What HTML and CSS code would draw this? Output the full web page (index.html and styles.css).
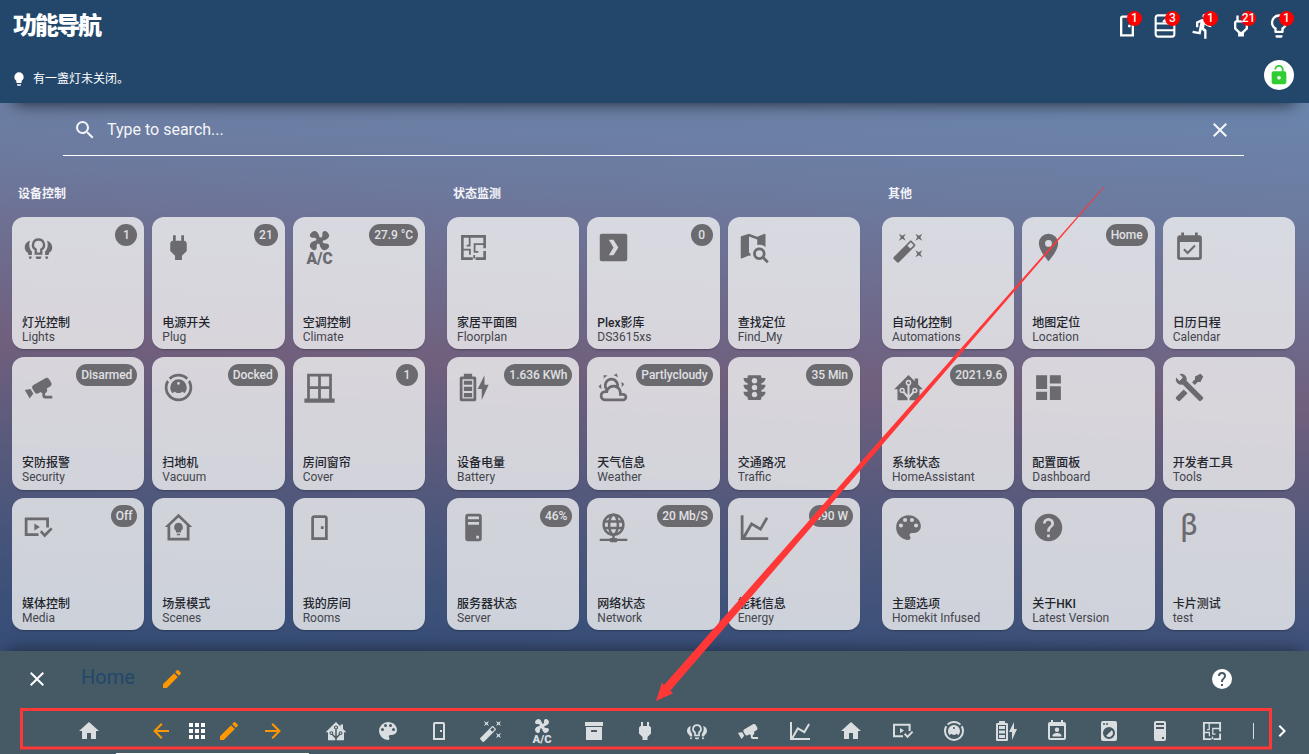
FILE: index.html
```html
<!DOCTYPE html>
<html lang="zh-CN">
<head>
<meta charset="utf-8">
<title>功能导航</title>
<link rel="stylesheet" href="styles.css">
</head>
<body>
<svg class="sprite" width="0" height="0" aria-hidden="true">
  <defs>
    <mask id="tree-mask" maskUnits="userSpaceOnUse" x="0" y="0" width="24" height="24">
      <rect width="24" height="24" fill="#fff"/>
      <g fill="none" stroke="#000" stroke-width="1.1"><path d="M12 10.2V22M12 20.5V19.3L8.3 15.3M12 20.5V19.3L15.7 15.3" stroke-width="1.5"/><circle cx="12" cy="8.5" r="1.5"/><circle cx="7.4" cy="14.1" r="1.4"/><circle cx="16.6" cy="14.1" r="1.4"/></g>
    </mask>
  </defs>
  <symbol id="home" viewBox="0 0 24 24"><path d="M10,20V14H14V20H19V12H22L12,3L2,12H5V20H10Z"/></symbol>
  <symbol id="left" viewBox="0 0 24 24"><path d="M20,11V13H8L13.5,18.5L12.08,19.92L4.16,12L12.08,4.08L13.5,5.5L8,11H20Z"/></symbol>
  <symbol id="right" viewBox="0 0 24 24"><path d="M4,11V13H16L10.5,18.5L11.92,19.92L19.84,12L11.92,4.08L10.5,5.5L16,11H4Z"/></symbol>
  <symbol id="pencil" viewBox="0 0 24 24"><path d="M20.71,7.04C21.1,6.65 21.1,6 20.71,5.63L18.37,3.29C18,2.9 17.35,2.9 16.96,3.29L15.12,5.12L18.87,8.87M3,17.25V21H6.75L17.81,9.93L14.06,6.18L3,17.25Z"/></symbol>
  <symbol id="apps" viewBox="0 0 24 24"><path d="M16,20H20V16H16M16,14H20V10H16M10,8H14V4H10M16,8H20V4H16M10,14H14V10H10M4,14H8V10H4M4,20H8V16H4M10,20H14V16H10M4,8H8V4H4V8Z"/></symbol>
  <symbol id="palette" viewBox="0 0 24 24"><path d="M17.5,12A1.5,1.5 0 0,1 16,10.5A1.5,1.5 0 0,1 17.5,9A1.5,1.5 0 0,1 19,10.5A1.5,1.5 0 0,1 17.5,12M14.5,8A1.5,1.5 0 0,1 13,6.5A1.5,1.5 0 0,1 14.5,5A1.5,1.5 0 0,1 16,6.5A1.5,1.5 0 0,1 14.5,8M9.5,8A1.5,1.5 0 0,1 8,6.5A1.5,1.5 0 0,1 9.5,5A1.5,1.5 0 0,1 11,6.5A1.5,1.5 0 0,1 9.5,8M6.5,12A1.5,1.5 0 0,1 5,10.5A1.5,1.5 0 0,1 6.5,9A1.5,1.5 0 0,1 8,10.5A1.5,1.5 0 0,1 6.5,12M12,3A9,9 0 0,0 3,12A9,9 0 0,0 12,21A1.5,1.5 0 0,0 13.5,19.5C13.5,19.11 13.35,18.76 13.11,18.5C12.88,18.23 12.73,17.88 12.73,17.5A1.5,1.5 0 0,1 14.23,16H16A5,5 0 0,0 21,11C21,6.58 16.97,3 12,3Z"/></symbol>
  <symbol id="help" viewBox="0 0 24 24"><path d="M15.07,11.25L14.17,12.17C13.45,12.89 13,13.5 13,15H11V14.5C11,13.39 11.45,12.39 12.17,11.67L13.41,10.41C13.78,10.05 14,9.55 14,9C14,7.89 13.1,7 12,7A2,2 0 0,0 10,9H8A4,4 0 0,1 12,5A4,4 0 0,1 16,9C16,9.88 15.64,10.67 15.07,11.25M13,19H11V17H13M12,2A10,10 0 0,0 2,12A10,10 0 0,0 12,22A10,10 0 0,0 22,12C22,6.47 17.5,2 12,2Z"/></symbol>
  <symbol id="close" viewBox="0 0 24 24"><path d="M19,6.41L17.59,5L12,10.59L6.41,5L5,6.41L10.59,12L5,17.59L6.41,19L12,13.41L17.59,19L19,17.59L13.41,12L19,6.41Z"/></symbol>
  <symbol id="magnify" viewBox="0 0 24 24"><path d="M9.5,3A6.5,6.5 0 0,1 16,9.5C16,11.11 15.41,12.59 14.44,13.73L14.71,14H15.5L20.5,19L19,20.5L14,15.5V14.71L13.73,14.44C12.59,15.41 11.11,16 9.5,16A6.5,6.5 0 0,1 3,9.5A6.5,6.5 0 0,1 9.5,3M9.5,5C7,5 5,7 5,9.5C5,12 7,14 9.5,14C12,14 14,12 14,9.5C14,7 12,5 9.5,5Z"/></symbol>
  <symbol id="chevron" viewBox="0 0 24 24"><path d="M8.59,16.58L13.17,12L8.59,7.41L10,6L16,12L10,18L8.59,16.58Z"/></symbol>
  <symbol id="archive" viewBox="0 0 24 24"><path d="M3,3H21V7H3V3M4,8H20V21H4V8M9.5,11A0.5,0.5 0 0,0 9,11.5V13H15V11.5A0.5,0.5 0 0,0 14.5,11H9.5Z"/></symbol>
  <symbol id="bulbs" viewBox="0 0 24 24"><path d="M12 6.2a3.9 3.9 0 0 1 2 7.3V16.4H10V13.5A3.9 3.9 0 0 1 12 6.2Z" fill="none" stroke="currentColor" stroke-width="1.7"/><path d="M10 18.6H14V19.3A1 1 0 0 1 13 20.3H11A1 1 0 0 1 10 19.3ZM5 18.6H7.2L6.6 20.3H6A1 1 0 0 1 5 19.3ZM19 18.6H16.8L17.4 20.3H18A1 1 0 0 0 19 19.3ZM5.8 7.1C3.4 7.6 2 9.8 2 12C2 13.8 3 15.2 4.4 16V16.5Q4.4 17.4 5.3 17.4H7.2V14.9C5.4 13 4.7 10 5.8 7.1ZM18.2 7.1C20.6 7.6 22 9.8 22 12C22 13.8 21 15.2 19.6 16V16.5Q19.6 17.4 18.7 17.4H16.8V14.9C18.6 13 19.3 10 18.2 7.1Z"/></symbol>
  <symbol id="plug" viewBox="0 0 24 24"><path d="M16,7V3H14V7H10V3H8V7C7,7 6,8 6,9V14.5L9.5,18V21H14.5V18L18,14.5V9C18,8 17,7 16,7Z"/></symbol>
  <symbol id="fan" viewBox="0 0 24 24"><path d="M6.59,0.66C8.93,-1.15 11.47,1.06 12.04,4.5C12.47,4.5 12.89,4.62 13.27,4.84C13.79,4.24 14.25,3.42 14.07,2.5C13.65,0.35 16.06,-1.39 18.35,1.58C20.16,3.92 17.95,6.46 14.5,7.03C14.5,7.46 14.39,7.89 14.16,8.27C14.76,8.78 15.58,9.24 16.5,9.06C18.63,8.64 20.38,11.04 17.41,13.34C15.07,15.15 12.53,12.94 11.96,9.5C11.53,9.5 11.11,9.37 10.74,9.15C10.22,9.75 9.75,10.58 9.93,11.5C10.35,13.64 7.94,15.39 5.65,12.42C3.83,10.07 6.05,7.53 9.5,6.97C9.5,6.54 9.63,6.12 9.85,5.74C9.25,5.23 8.43,4.76 7.5,4.94C5.37,5.36 3.62,2.96 6.59,0.66Z"/></symbol>
  <symbol id="cctv" viewBox="0 0 24 24"><path d="M18.15,4.94C17.77,4.91 17.37,5 17,5.2L8.35,10.2C7.39,10.76 7.07,12 7.62,12.94L9.12,15.53C9.67,16.5 10.89,16.82 11.85,16.27L13.65,15.23C13.92,15.69 14.32,16.06 14.81,16.27V18.04C14.81,19.13 15.7,20 16.81,20H22V18.04H16.81V16.27C17.72,15.87 18.31,14.97 18.31,14C18.31,13.54 18.19,13.11 17.97,12.73L20.5,11.27C21.47,10.71 21.8,9.5 21.24,8.53L19.74,5.94C19.4,5.34 18.79,5 18.15,4.94M6.22,13.17L2,13.87L2.75,15.17L4.75,18.63L5.5,19.93L8.22,16.63L6.22,13.17Z"/></symbol>
  <symbol id="chart" viewBox="0 0 24 24"><path d="M16,11.78L20.24,4.45L21.97,5.45L16.74,14.5L10.23,10.75L5.46,19H22V21H2V3H4V17.54L9.5,8L16,11.78Z"/></symbol>
  <symbol id="vacuum" viewBox="0 0 24 24"><path d="M12,2C14.65,2 17.19,3.06 19.07,4.93L17.65,6.35C16.15,4.85 14.12,4 12,4C9.88,4 7.84,4.84 6.35,6.35L4.93,4.93C6.81,3.06 9.35,2 12,2M3.66,6.5L5.11,7.94C4.39,9.17 4,10.57 4,12A8,8 0 0,0 12,20A8,8 0 0,0 20,12C20,10.57 19.61,9.17 18.88,7.94L20.34,6.5C21.42,8.12 22,10.04 22,12A10,10 0 0,1 12,22A10,10 0 0,1 2,12C2,10.04 2.58,8.12 3.66,6.5M12,6A6,6 0 0,1 18,12C18,13.59 17.37,15.12 16.24,16.24L14.83,14.83C14.08,15.58 13.06,16 12,16C10.94,16 9.92,15.58 9.17,14.83L7.76,16.24C6.63,15.12 6,13.59 6,12A6,6 0 0,1 12,6M12,8A1,1 0 0,0 11,9A1,1 0 0,0 12,10A1,1 0 0,0 13,9A1,1 0 0,0 12,8Z"/></symbol>
  <symbol id="battery" viewBox="0 0 24 24"><path d="M12 20H4V6H12M12.67 4H11V2H5V4H3.33C2.6 4 2 4.6 2 5.33V20.67C2 21.4 2.6 22 3.33 22H12.67C13.41 22 14 21.41 14 20.67V5.33C14 4.6 13.4 4 12.67 4M11 16H5V19H11V16M11 11.5H5V14.5H11V11.5M23 10H20V3L15 13H18V21M11 7H5V10H11V7Z"/></symbol>
  <symbol id="window" viewBox="0 0 24 24"><path d="M21 20V2H3V20H1V23H23V20M19 4V11H13V4M5 4H11V11H5M5 20V13H11V20M13 20V13H19V20Z"/></symbol>
  <symbol id="door" viewBox="0 0 24 24"><path d="M8,3C6.89,3 6,3.89 6,5V21H18V5C18,3.89 17.11,3 16,3H8M8,5H16V19H8V5M13,11V13H15V11H13Z"/></symbol>
  <symbol id="homebulb" viewBox="0 0 24 24"><path fill-rule="evenodd" d="M12 2L2 11.6H4V21.5H20V11.6H22ZM12 4.8L18 10.4V19.5H6V10.4ZM12 8.6A3.2 3.2 0 0 0 10.2 14.4V15.6H13.8V14.4A3.2 3.2 0 0 0 12 8.6ZM10.8 16.6V17.7H13.2V16.6Z"/></symbol>
  <symbol id="media" viewBox="0 0 24 24"><path d="M12 17.2H3V5.8H18.6V12" fill="none" stroke="currentColor" stroke-width="2"/><path d="M9 9V14.2L13 11.6ZM14.3 14L13 15.4L16.5 19.3L22.3 13.3L20.9 12L16.5 16.4Z"/></symbol>
  <symbol id="plan" viewBox="0 0 24 24"><g fill="none" stroke="currentColor"><path stroke-width="1.9" d="M20.1 14.5V20.1H13.5M11.5 20.1H3.9V3.9H20.1V12.5"/><path stroke-width="1.3" d="M9.2 4V11.2M4 13.5H9.4V17.2M20 9.5H12.8V15.2H15.5M12.5 17.5V20M7 10.6H9.6"/></g></symbol>
  <symbol id="plex" viewBox="0 0 24 24"><path fill-rule="evenodd" d="M3.5 2H20.5A1.5 1.5 0 0 1 22 3.5V20.5A1.5 1.5 0 0 1 20.5 22H3.5A1.5 1.5 0 0 1 2 20.5V3.5A1.5 1.5 0 0 1 3.5 2ZM8.6 6.3L12 12L8.6 17.7H12L15.5 12L12 6.3Z"/></symbol>
  <symbol id="mapsearch" viewBox="0 0 24 24"><path d="M15.5,12C18,12 20,14 20,16.5C20,17.38 19.75,18.21 19.31,18.9L22.39,22L21,23.39L17.88,20.32C17.19,20.75 16.37,21 15.5,21C13,21 11,19 11,16.5C11,14 13,12 15.5,12M15.5,14A2.5,2.5 0 0,0 13,16.5A2.5,2.5 0 0,0 15.5,19A2.5,2.5 0 0,0 18,16.5A2.5,2.5 0 0,0 15.5,14M19.5 2L14 4.1 8 2 2.36 3.9C2.15 4 2 4.15 2 4.38V19.5A.5.5 0 0 0 2.66 19.97L8 17.9 9.15 18.3A6.5 6.5 0 0 1 9 16.24L8 15.89V4L14 6.11V10.17A6.5 6.5 0 0 1 20 11.8V2.5A.5.5 0 0 0 19.5 2Z"/></symbol>
  <symbol id="weather" viewBox="0 0 24 24"><path d="M12.74,5.47C15.1,6.5 16.35,9.03 15.92,11.46C17.19,12.56 18,14.19 18,16V16.17C18.31,16.06 18.65,16 19,16A3,3 0 0,1 22,19A3,3 0 0,1 19,22H6A4,4 0 0,1 2,18A4,4 0 0,1 6,14H6.27C5,12.45 4.6,10.24 5.5,8.26C6.72,5.5 9.97,4.24 12.74,5.47M11.93,7.3C10.16,6.5 8.09,7.31 7.31,9.07C6.85,10.09 6.93,11.22 7.41,12.13C8.5,10.83 10.16,10 12,10C12.7,10 13.38,10.12 14,10.34C13.94,9.06 13.18,7.86 11.93,7.3M13.55,3.64C13,3.4 12.45,3.23 11.88,3.12L14.37,1.82L15.27,4.71C14.76,4.29 14.19,3.93 13.55,3.64M6.09,4.44C5.6,4.79 5.17,5.19 4.8,5.63L4.91,2.82L7.87,3.5C7.25,3.71 6.65,4.03 6.09,4.44M18,9.71C17.91,9.12 17.78,8.55 17.59,8L19.97,9.5L17.92,11.73C18.03,11.08 18.05,10.4 18,9.71M3.04,11.3C3.11,11.9 3.24,12.47 3.43,13L1.06,11.5L3.1,9.28C3,9.93 2.97,10.61 3.04,11.3M19,18H16V16A4,4 0 0,0 12,12A4,4 0 0,0 8,16H6A2,2 0 0,0 4,18A2,2 0 0,0 6,20H19A1,1 0 0,0 20,19A1,1 0 0,0 19,18Z"/></symbol>
  <symbol id="traffic" viewBox="0 0 24 24"><path d="M12,9A2,2 0 0,1 10,7C10,5.89 10.9,5 12,5C13.11,5 14,5.89 14,7A2,2 0 0,1 12,9M12,14A2,2 0 0,1 10,12C10,10.89 10.9,10 12,10C13.11,10 14,10.89 14,12A2,2 0 0,1 12,14M12,19A2,2 0 0,1 10,17C10,15.89 10.9,15 12,15C13.11,15 14,15.89 14,17A2,2 0 0,1 12,19M20,10H17V8.86C18.72,8.41 20,6.86 20,5H17V4A1,1 0 0,0 16,3H8A1,1 0 0,0 7,4V5H4C4,6.86 5.28,8.41 7,8.86V10H4C4,11.86 5.28,13.41 7,13.86V15H4C4,16.86 5.28,18.41 7,18.86V20A1,1 0 0,0 8,21H16A1,1 0 0,0 17,20V18.86C18.72,18.41 20,16.86 20,15H17V13.86C18.72,13.41 20,11.86 20,10Z"/></symbol>
  <symbol id="tower" viewBox="0 0 24 24"><path d="M8,2H16A2,2 0 0,1 18,4V20A2,2 0 0,1 16,22H8A2,2 0 0,1 6,20V4A2,2 0 0,1 8,2M8,4V6H16V4H8M16,8H8V10H16V8M16,18H14V20H16V18Z"/></symbol>
  <symbol id="network" viewBox="0 0 24 24"><g fill="none" stroke="currentColor" stroke-width="1.8"><circle cx="12" cy="10" r="7.2"/><ellipse cx="12" cy="10" rx="3.2" ry="7.2"/><path d="M5.2 7.6H18.8M5.2 12.4H18.8M12 17V21M2 21H22"/></g><rect x="9.3" y="19.6" width="5.4" height="3.2" rx=".8"/></symbol>
  <symbol id="wand" viewBox="0 0 24 24"><path d="M7.5,5.6L5,7L6.4,4.5L5,2L7.5,3.4L10,2L8.6,4.5L10,7L7.5,5.6M19.5,15.4L22,14L20.6,16.5L22,19L19.5,17.6L17,19L18.4,16.5L17,14L19.5,15.4M22,2L20.6,4.5L22,7L19.5,5.6L17,7L18.4,4.5L17,2L19.5,3.4L22,2M13.34,12.78L15.78,10.34L13.66,8.22L11.22,10.66L13.34,12.78M14.37,7.29L16.71,9.63C17.1,10 17.1,10.65 16.71,11.04L5.04,22.71C4.65,23.1 4,23.1 3.63,22.71L1.29,20.37C0.9,20 0.9,19.35 1.29,18.96L12.96,7.29C13.35,6.9 14,6.9 14.37,7.29Z"/></symbol>
  <symbol id="marker" viewBox="0 0 24 24"><path d="M12,11.5A2.5,2.5 0 0,1 9.5,9A2.5,2.5 0 0,1 12,6.5A2.5,2.5 0 0,1 14.5,9A2.5,2.5 0 0,1 12,11.5M12,2A7,7 0 0,0 5,9C5,14.25 12,22 12,22C12,22 19,14.25 19,9A7,7 0 0,0 12,2Z"/></symbol>
  <symbol id="calendar" viewBox="0 0 24 24"><path d="M19,19H5V8H19M19,3H18V1H16V3H8V1H6V3H5C3.89,3 3,3.9 3,5V19A2,2 0 0,0 5,21H19A2,2 0 0,0 21,19V5A2,2 0 0,0 19,3M16.53,11.06L15.47,10L10.59,14.88L8.47,12.76L7.41,13.82L10.59,17L16.53,11.06Z"/></symbol>
  <symbol id="contact" viewBox="0 0 24 24"><path d="M19,19H5V7H19M19,3H18V1H16V3H8V1H6V3H5C3.89,3 3,3.9 3,5V19A2,2 0 0,0 5,21H19A2,2 0 0,0 21,19V5A2,2 0 0,0 19,3M12 8.5A2.2 2.2 0 1 0 12 12.9A2.2 2.2 0 1 0 12 8.5M7.5 17.5H16.5V16.6C16.5 14.8 13.5 14 12 14S7.5 14.8 7.5 16.6Z"/></symbol>
  <symbol id="hass" viewBox="0 0 24 24"><path mask="url(#tree-mask)" d="M12 2.9L1.6 13.3H4V21.3H20V13.3H22.4L19 9.9V5.4H16.5V7.4Z"/></symbol>
  <symbol id="dashboard" viewBox="0 0 24 24"><path d="M13,3V9H21V3M13,21H21V11H13M3,21H11V15H3M3,13H11V3H3V13Z"/></symbol>
  <symbol id="tools" viewBox="0 0 24 24"><path d="M21.71 20.29L20.29 21.71A1 1 0 0 1 18.88 21.71L7 9.85A3.81 3.81 0 0 1 6 10A4 4 0 0 1 2.22 4.7L4.76 7.24L5.29 6.71L6.71 5.29L7.24 4.76L4.7 2.22A4 4 0 0 1 10 6A3.81 3.81 0 0 1 9.85 7L21.71 18.88A1 1 0 0 1 21.71 20.29M2.29 18.88A1 1 0 0 0 2.29 20.29L3.71 21.71A1 1 0 0 0 5.12 21.71L10.59 16.25L7.76 13.42M20 2L16 4V6L13.83 8.17L15.83 10.17L18 8H20L22 4Z"/></symbol>
  <symbol id="washer" viewBox="0 0 24 24"><path d="M14.83,11.17C16.39,12.73 16.39,15.27 14.83,16.83C13.27,18.39 10.73,18.39 9.17,16.83L14.83,11.17M6,2H18A2,2 0 0,1 20,4V20A2,2 0 0,1 18,22H6A2,2 0 0,1 4,20V4A2,2 0 0,1 6,2M7,4A1,1 0 0,0 6,5A1,1 0 0,0 7,6A1,1 0 0,0 8,5A1,1 0 0,0 7,4M10,4A1,1 0 0,0 9,5A1,1 0 0,0 10,6A1,1 0 0,0 11,5A1,1 0 0,0 10,4M12,8A6,6 0 0,0 6,14A6,6 0 0,0 12,20A6,6 0 0,0 18,14A6,6 0 0,0 12,8Z"/></symbol>
  <symbol id="unlock" viewBox="0 0 24 24"><path d="M12,17C13.1,17 14,16.1 14,15C14,13.9 13.1,13 12,13A2,2 0 0,0 10,15A2,2 0 0,0 12,17M18,8A2,2 0 0,1 20,10V20A2,2 0 0,1 18,22H6A2,2 0 0,1 4,20V10C4,8.89 4.9,8 6,8H15V6A3,3 0 0,0 12,3A3,3 0 0,0 9,6H7A5,5 0 0,1 12,1A5,5 0 0,1 17,6V8H18Z"/></symbol>
  <symbol id="bulb" viewBox="0 0 24 24"><path d="M12,2A7,7 0 0,0 5,9C5,11.38 6.19,13.47 8,14.74V17A1,1 0 0,0 9,18H15A1,1 0 0,0 16,17V14.74C17.81,13.47 19,11.38 19,9A7,7 0 0,0 12,2M9,21A1,1 0 0,0 10,22H14A1,1 0 0,0 15,21V20H9V21Z"/></symbol>
  <symbol id="bulb-outline" viewBox="0 0 24 24"><path d="M12,2A7,7 0 0,1 19,9C19,11.38 17.81,13.47 16,14.74V17A1,1 0 0,1 15,18H9A1,1 0 0,1 8,17V14.74C6.19,13.47 5,11.38 5,9A7,7 0 0,1 12,2M9,21V20H15V21A1,1 0 0,1 14,22H10A1,1 0 0,1 9,21M12,4A5,5 0 0,0 7,9C7,11.05 8.23,12.81 10,13.58V16H14V13.58C15.77,12.81 17,11.05 17,9A5,5 0 0,0 12,4Z"/></symbol>
  <symbol id="run" viewBox="0 0 24 24"><path d="M13.5,5.5C14.59,5.5 15.5,4.58 15.5,3.5C15.5,2.38 14.59,1.5 13.5,1.5C12.39,1.5 11.5,2.38 11.5,3.5C11.5,4.58 12.39,5.5 13.5,5.5M9.89,19.38L10.89,15L13,17V23H15V15.5L12.89,13.5L13.5,10.5C14.79,12 16.79,13 19,13V11C17.09,11 15.5,10 14.69,8.58L13.69,7C13.29,6.38 12.69,6 12,6C11.69,6 11.5,6.08 11.19,6.08L6,8.28V13H8V9.58L9.79,8.88L8.19,17L3.29,16L2.89,18L9.89,19.38Z"/></symbol>
  <symbol id="shutter" viewBox="0 0 24 24"><path fill="none" stroke="currentColor" stroke-width="1.8" d="M6 2.9H18A2 2 0 0 1 20 4.9V19.1A2 2 0 0 1 18 21.1H6A2 2 0 0 1 4 19.1V4.9A2 2 0 0 1 6 2.9ZM4 9.8H20M4 15.6H20"/><path d="M10 9V7.4L12 5.8H14V9Z"/></symbol>
  <symbol id="plug-outline" viewBox="0 0 24 24"><path d="M16,7V3H14V7H10V3H8V7C7,7 6,8 6,9V14.5L9.5,18V21H14.5V18L18,14.5V9C18,8 17,7 16,7M16,13.67L13.09,16.59L12.67,17H11.33L10.92,16.59L8,13.67V9.09C8,9.06 8.06,9 8.09,9H15.91C15.94,9 16,9.06 16,9.09V13.67Z"/></symbol>
</svg>

<header class="header">
  <div class="header-row">
    <h1 class="title">功能导航</h1>
    <div class="status">
      <span class="status-item"><svg class="icon"><use href="#door"/></svg><b class="count">1</b></span>
      <span class="status-item"><svg class="icon"><use href="#shutter"/></svg><b class="count">3</b></span>
      <span class="status-item"><svg class="icon"><use href="#run"/></svg><b class="count">1</b></span>
      <span class="status-item"><svg class="icon"><use href="#plug-outline"/></svg><b class="count">21</b></span>
      <span class="status-item"><svg class="icon"><use href="#bulb-outline"/></svg><b class="count">1</b></span>
    </div>
  </div>
  <div class="header-row notice-row">
    <p class="notice"><svg class="icon"><use href="#bulb"/></svg>有一盏灯未关闭。</p>
    <span class="lock"><svg class="icon"><use href="#unlock"/></svg></span>
  </div>
</header>

<main class="main">
  <div class="search"><svg class="icon"><use href="#magnify"/></svg><span class="search-text">Type to search...</span><svg class="icon"><use href="#close"/></svg></div>
  <div class="groups">
    <section class="group">
      <h2 class="group-title">设备控制</h2>
      <div class="cards">
        <article class="card"><svg class="icon"><use href="#bulbs"/></svg><span class="badge">1</span><h3>灯光控制</h3><p>Lights</p></article>
        <article class="card"><svg class="icon"><use href="#plug"/></svg><span class="badge">21</span><h3>电源开关</h3><p>Plug</p></article>
        <article class="card"><svg class="icon" viewBox="0 0 24 24"><use href="#fan"/><text class="ac-label" x="2.6" y="24.2" textLength="19" lengthAdjust="spacingAndGlyphs">A/C</text></svg><span class="badge">27.9 °C</span><h3>空调控制</h3><p>Climate</p></article>
        <article class="card"><svg class="icon"><use href="#cctv"/></svg><span class="badge">Disarmed</span><h3>安防报警</h3><p>Security</p></article>
        <article class="card"><svg class="icon"><use href="#vacuum"/></svg><span class="badge">Docked</span><h3>扫地机</h3><p>Vacuum</p></article>
        <article class="card"><svg class="icon"><use href="#window"/></svg><span class="badge">1</span><h3>房间窗帘</h3><p>Cover</p></article>
        <article class="card"><svg class="icon"><use href="#media"/></svg><span class="badge">Off</span><h3>媒体控制</h3><p>Media</p></article>
        <article class="card"><svg class="icon"><use href="#homebulb"/></svg><h3>场景模式</h3><p>Scenes</p></article>
        <article class="card"><svg class="icon"><use href="#door"/></svg><h3>我的房间</h3><p>Rooms</p></article>
      </div>
    </section>
    <section class="group">
      <h2 class="group-title">状态监测</h2>
      <div class="cards">
        <article class="card"><svg class="icon"><use href="#plan"/></svg><h3>家居平面图</h3><p>Floorplan</p></article>
        <article class="card"><svg class="icon"><use href="#plex"/></svg><span class="badge">0</span><h3>Plex影库</h3><p>DS3615xs</p></article>
        <article class="card"><svg class="icon"><use href="#mapsearch"/></svg><h3>查找定位</h3><p>Find_My</p></article>
        <article class="card"><svg class="icon"><use href="#battery"/></svg><span class="badge">1.636 KWh</span><h3>设备电量</h3><p>Battery</p></article>
        <article class="card"><svg class="icon"><use href="#weather"/></svg><span class="badge">Partlycloudy</span><h3>天气信息</h3><p>Weather</p></article>
        <article class="card"><svg class="icon"><use href="#traffic"/></svg><span class="badge">35 Min</span><h3>交通路况</h3><p>Traffic</p></article>
        <article class="card"><svg class="icon"><use href="#tower"/></svg><span class="badge">46%</span><h3>服务器状态</h3><p>Server</p></article>
        <article class="card"><svg class="icon"><use href="#network"/></svg><span class="badge">20 Mb/S</span><h3>网络状态</h3><p>Network</p></article>
        <article class="card"><svg class="icon"><use href="#chart"/></svg><span class="badge">490 W</span><h3>能耗信息</h3><p>Energy</p></article>
      </div>
    </section>
    <section class="group">
      <h2 class="group-title">其他</h2>
      <div class="cards">
        <article class="card"><svg class="icon"><use href="#wand"/></svg><h3>自动化控制</h3><p>Automations</p></article>
        <article class="card"><svg class="icon"><use href="#marker"/></svg><span class="badge">Home</span><h3>地图定位</h3><p>Location</p></article>
        <article class="card"><svg class="icon"><use href="#calendar"/></svg><h3>日历日程</h3><p>Calendar</p></article>
        <article class="card"><svg class="icon"><use href="#hass"/></svg><span class="badge">2021.9.6</span><h3>系统状态</h3><p>HomeAssistant</p></article>
        <article class="card"><svg class="icon"><use href="#dashboard"/></svg><h3>配置面板</h3><p>Dashboard</p></article>
        <article class="card"><svg class="icon"><use href="#tools"/></svg><h3>开发者工具</h3><p>Tools</p></article>
        <article class="card"><svg class="icon"><use href="#palette"/></svg><h3>主题选项</h3><p>Homekit Infused</p></article>
        <article class="card"><svg class="icon"><use href="#help"/></svg><h3>关于HKI</h3><p>Latest Version</p></article>
        <article class="card"><svg class="icon" viewBox="0 0 24 24"><text class="beta-label" x="5.2" y="17.8">β</text></svg><h3>卡片测试</h3><p>test</p></article>
      </div>
    </section>
  </div>
</main>

<footer class="editor">
  <div class="editor-bar">
    <svg class="icon"><use href="#close"/></svg>
    <span class="editor-title">Home</span>
    <svg class="icon accent"><use href="#pencil"/></svg>
    <svg class="icon editor-help"><use href="#help"/></svg>
  </div>
  <nav class="tabs">
    <span class="tab"><svg class="icon"><use href="#home"/></svg></span>
    <span class="tab-current">
      <svg class="icon accent"><use href="#left"/></svg>
      <svg class="icon apps"><use href="#apps"/></svg>
      <svg class="icon accent edit"><use href="#pencil"/></svg>
      <svg class="icon accent"><use href="#right"/></svg>
    </span>
    <span class="tab"><svg class="icon"><use href="#hass"/></svg></span>
    <span class="tab"><svg class="icon"><use href="#palette"/></svg></span>
    <span class="tab"><svg class="icon"><use href="#door"/></svg></span>
    <span class="tab"><svg class="icon"><use href="#wand"/></svg></span>
    <span class="tab"><svg class="icon" viewBox="0 0 24 24"><use href="#fan"/><text class="ac-label" x="2.6" y="24.2" textLength="19" lengthAdjust="spacingAndGlyphs">A/C</text></svg></span>
    <span class="tab"><svg class="icon"><use href="#archive"/></svg></span>
    <span class="tab"><svg class="icon"><use href="#plug"/></svg></span>
    <span class="tab"><svg class="icon"><use href="#bulbs"/></svg></span>
    <span class="tab"><svg class="icon"><use href="#cctv"/></svg></span>
    <span class="tab"><svg class="icon"><use href="#chart"/></svg></span>
    <span class="tab"><svg class="icon"><use href="#home"/></svg></span>
    <span class="tab"><svg class="icon"><use href="#media"/></svg></span>
    <span class="tab"><svg class="icon"><use href="#vacuum"/></svg></span>
    <span class="tab"><svg class="icon"><use href="#battery"/></svg></span>
    <span class="tab"><svg class="icon"><use href="#contact"/></svg></span>
    <span class="tab"><svg class="icon"><use href="#washer"/></svg></span>
    <span class="tab"><svg class="icon"><use href="#tower"/></svg></span>
    <span class="tab"><svg class="icon"><use href="#plan"/></svg></span>
    <span class="tab-cut"></span>
    <svg class="icon next"><use href="#chevron"/></svg>
  </nav>
</footer>

<svg class="annotation" viewBox="0 0 1309 754">
  <rect x="21.5" y="709.5" width="1249" height="38.5"/>
  <path d="M1104.2 187.2L1103.6 186.8L663.8 685.2L662 682.3L656 701L673.2 693.2L670.2 690.8Z"/>
</svg>
</body>
</html>
```

FILE: styles.css
```css
* { box-sizing: border-box; }

body {
  margin: 0;
  width: 1309px;
  height: 754px;
  overflow: hidden;
  display: flex;
  flex-direction: column;
  position: relative;
  font-family: Roboto, "Noto Sans CJK SC", sans-serif;
  background: linear-gradient(183deg, #6b89b0 70px, #6c7a9f 220px, #705f7d 410px, #54597c 530px, #3a5079 670px, #344b74 780px);
}

h1, h2, h3, p { margin: 0; }

.sprite { position: absolute; }

.icon {
  display: block;
  flex: none;
  width: 24px;
  height: 24px;
  fill: currentColor;
  overflow: visible;
}

.ac-label {
  font: 900 11.4px Roboto, sans-serif;
}

.beta-label {
  font: 500 20.5px "Noto Sans", sans-serif;
}

.header {
  flex: none;
  height: 103px;
  padding: 8px 15px 0 13px;
  background: #22476b;
  color: #fff;
  box-shadow: 0 14px 16px -14px rgba(0, 0, 0, .75);
}

.header-row {
  display: flex;
  justify-content: space-between;
  align-items: center;
  height: 36px;
}

.title {
  font-size: 24px;
  font-weight: 900;
  line-height: 34px;
  letter-spacing: -2.3px;
}

.status {
  display: flex;
  gap: 10px;
  padding-right: 1px;
}

.status-item { position: relative; }

.status-item .icon {
  width: 28px;
  height: 28px;
}

.count {
  position: absolute;
  left: 14px;
  top: -1px;
  width: 15px;
  height: 15px;
  border-radius: 50%;
  background: #f00;
  font-size: 12px;
  font-weight: 500;
  line-height: 15px;
  display: flex;
  justify-content: center;
}

.notice-row { height: 62px; }

.notice {
  display: flex;
  align-items: center;
  gap: 6px;
  margin: 7px 0 0 -2px;
  font-size: 12px;
  line-height: 18px;
}

.notice .icon {
  width: 16px;
  height: 16px;
}

.lock {
  display: grid;
  place-items: center;
  width: 30px;
  height: 30px;
  border-radius: 50%;
  background: #fff;
  color: #32cd32;
}

.lock .icon {
  width: 22px;
  height: 22px;
}

.main {
  flex: none;
  height: 548px;
  padding: 0 14px 0 12px;
}

.search {
  display: flex;
  align-items: center;
  gap: 10px;
  height: 53px;
  margin: 0 51px;
  padding: 0 12px 0 10px;
  border-bottom: 1px solid #fff;
  color: #f4f5f8;
  font-size: 16px;
}

.search .icon { margin-top: 2px; }

.search-text { flex: 1; }

.groups {
  display: grid;
  grid-template-columns: repeat(3, 1fr);
  gap: 22px;
}

.group-title {
  padding: 29px 6px 0;
  height: 61px;
  color: #f4f4f8;
  font-size: 12px;
  line-height: 18px;
}

.cards {
  display: grid;
  grid-template-columns: repeat(3, 1fr);
  gap: 8px;
}

.card {
  position: relative;
  display: flex;
  flex-direction: column;
  height: 132.33px;
  padding: 13.5px 10px 5.4px;
  border-radius: 12px;
  background: rgba(243, 243, 243, .8);
  box-shadow: 0 2px 2px -1px rgba(0, 0, 0, .25);
}

.card .icon {
  width: 33px;
  height: 33px;
  color: #6a6a6f;
}

.card h3 {
  margin-top: auto;
  color: #23252c;
  font-size: 12px;
  font-weight: 500;
  line-height: 13px;
}

.card p {
  color: #44454c;
  font-size: 12px;
  line-height: 14px;
}

.badge {
  position: absolute;
  top: 7px;
  right: 7px;
  min-width: 22px;
  height: 22px;
  padding: 0 5px;
  border-radius: 11px;
  background: #6a6a6f;
  color: #e0e0e4;
  font-size: 12px;
  font-weight: 500;
  line-height: 22px;
  letter-spacing: -.05px;
  text-align: center;
}

.editor {
  flex: none;
  height: 103px;
  background: #455a64;
  color: #fff;
  box-shadow: 0 -8px 16px -8px rgba(0, 0, 0, .5);
}

.editor-bar {
  display: flex;
  align-items: center;
  height: 56px;
  padding: 0 75px 0 25px;
}

.editor-title {
  margin: -4px 25px 0 32px;
  color: #22476b;
  font-size: 20px;
}

.editor-help { margin-left: auto; }

.accent { color: #ff9800; }

.tabs {
  display: flex;
  height: 48px;
  padding-left: 63.25px;
}

.tab {
  display: grid;
  place-items: center;
  flex: none;
  width: 51.5px;
  color: #dadee0;
}

.tab-current {
  display: flex;
  align-items: center;
  width: 193px;
  margin: 0 1.25px;
  padding: 2px 0 0 33px;
  border-bottom: 2px solid #fff;
}

.apps { margin-left: 12px; }

.edit { margin: 0 20px 0 8px; }

.tab-cut {
  width: 1px;
  height: 16px;
  margin: 16px 16px 0 16px;
  background: #dadee0;
}

.next { margin-top: 12px; }

.annotation {
  position: absolute;
  inset: 0;
  width: 1309px;
  height: 754px;
  pointer-events: none;
}

.annotation rect {
  fill: none;
  stroke: #ff3737;
  stroke-width: 3;
}

.annotation path { fill: #ff3737; }
```
